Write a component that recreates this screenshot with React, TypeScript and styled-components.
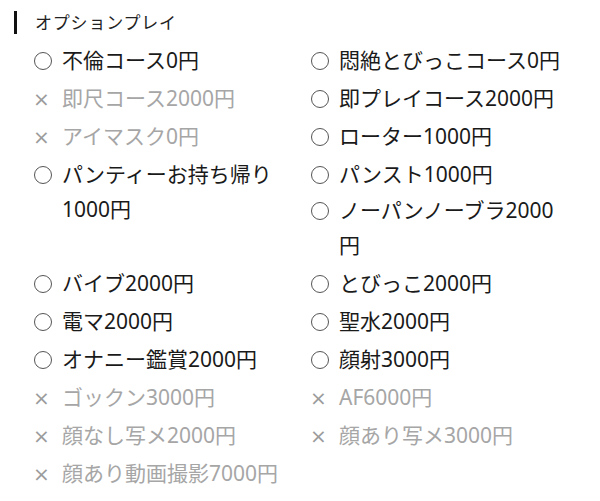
import styled, { createGlobalStyle } from "styled-components";

const options = [
  { label: "不倫コース0円", ok: true, col: 1, row: 1 },
  { label: "悶絶とびっこコース0円", ok: true, col: 2, row: 1 },
  { label: "即尺コース2000円", ok: false, col: 1, row: 2 },
  { label: "即プレイコース2000円", ok: true, col: 2, row: 2 },
  { label: "アイマスク0円", ok: false, col: 1, row: 3 },
  { label: "ローター1000円", ok: true, col: 2, row: 3 },
  { label: "パンティーお持ち帰り1000円", ok: true, col: 1, row: 4, span: 2 },
  { label: "パンスト1000円", ok: true, col: 2, row: 4 },
  { label: "ノーパンノーブラ2000円", ok: true, col: 2, row: 5, span: 2 },
  { label: "バイブ2000円", ok: true, col: 1, row: 7 },
  { label: "とびっこ2000円", ok: true, col: 2, row: 7 },
  { label: "電マ2000円", ok: true, col: 1, row: 8 },
  { label: "聖水2000円", ok: true, col: 2, row: 8 },
  { label: "オナニー鑑賞2000円", ok: true, col: 1, row: 9 },
  { label: "顔射3000円", ok: true, col: 2, row: 9 },
  { label: "ゴックン3000円", ok: false, col: 1, row: 10 },
  { label: "AF6000円", ok: false, col: 2, row: 10 },
  { label: "顔なし写メ2000円", ok: false, col: 1, row: 11 },
  { label: "顔あり写メ3000円", ok: false, col: 2, row: 11 },
  { label: "顔あり動画撮影7000円", ok: false, col: 1, row: 12 },
];

export default function App() {
  return (
    <>
      <GlobalStyle />
      <Section>
        <Heading>オプションプレイ</Heading>
        <List>
          {options.map((o) => (
            <Option key={o.label} $col={o.col} $row={o.row} $span={o.span || 1} $ok={o.ok}>
              <Mark>{o.ok ? <Ring /> : <Cross>×</Cross>}</Mark>
              <Label>{o.label}</Label>
            </Option>
          ))}
        </List>
      </Section>
    </>
  );
}

const GlobalStyle = createGlobalStyle`
  body {
    margin: 0;
    background: #ffffff;
    font-family: "Noto Sans", "Noto Sans CJK JP", sans-serif;
  }
`;

const Section = styled.div`
  padding-top: 11px;
`;

const Heading = styled.h3`
  margin: 0 0 0 14px;
  padding-left: 18px;
  border-left: 3px solid #111;
  font-size: 17px;
  font-weight: 400;
  line-height: 23px;
  color: #222;
  letter-spacing: 0.8px;
`;

const List = styled.div`
  display: grid;
  grid-template-columns: 277px 253px;
  grid-template-rows: repeat(3, 38px) 36px 36px 37px repeat(6, 38px);
  padding-left: 34px;
  margin-top: 9px;
`;

const Option = styled.div<{ $col: number; $row: number; $span: number; $ok: boolean }>`
  grid-column: ${(p) => p.$col};
  grid-row: ${(p) => p.$row} / span ${(p) => p.$span};
  display: flex;
  align-items: flex-start;
  font-size: 21px;
  line-height: 35px;
  color: ${(p) => (p.$ok ? "#1a1a1a" : "#a6a6a6")};
`;

const Mark = styled.span`
  flex: none;
  width: 28px;
  height: 35px;
  display: flex;
  align-items: center;
`;

const Ring = styled.span`
  flex: none;
  box-sizing: border-box;
  width: 18px;
  height: 18px;
  border: 1.4px solid #555;
  border-radius: 50%;
`;

const Cross = styled.span`
  font-family: "DejaVu Sans", sans-serif;
  font-size: 20px;
  line-height: 1;
  color: #9c9c9c;
  margin-left: -1px;
`;

const Label = styled.span`
  width: 225px;
`;
